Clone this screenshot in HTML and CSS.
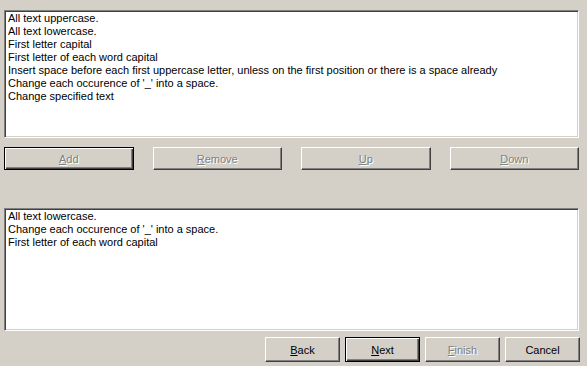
FILE: index.html
```html
<!DOCTYPE html>
<html>
<head>
  <title>Rename Rules</title>
  <link rel="stylesheet" href="styles.css">
</head>
<body>
  <div class="dialog">
    <div class="listbox list-available">
      <div class="item">All text uppercase.</div>
      <div class="item">All text lowercase.</div>
      <div class="item">First letter capital</div>
      <div class="item">First letter of each word capital</div>
      <div class="item">Insert space before each first uppercase letter, unless on the first position or there is a space already</div>
      <div class="item">Change each occurence of '_' into a space.</div>
      <div class="item">Change specified text</div>
    </div>

    <div class="edit-buttons">
      <button class="btn default" disabled><u>A</u>dd</button>
      <button class="btn" disabled><u>R</u>emove</button>
      <button class="btn" disabled><u>U</u>p</button>
      <button class="btn" disabled><u>D</u>own</button>
    </div>

    <div class="listbox list-selected">
      <div class="item">All text lowercase.</div>
      <div class="item">Change each occurence of '_' into a space.</div>
      <div class="item">First letter of each word capital</div>
    </div>

    <div class="wizard-buttons">
      <button class="btn wiz"><u>B</u>ack</button>
      <button class="btn wiz default"><u>N</u>ext</button>
      <button class="btn wiz" disabled><u>F</u>inish</button>
      <button class="btn wiz">Cancel</button>
    </div>
  </div>
</body>
</html>
```

FILE: styles.css
```css
body {
  margin: 0;
  background: #d4d0c8;
  font-family: "Liberation Sans", Arial, sans-serif;
  font-size: 11px;
  color: #000;
}
.dialog {
  width: 575px;
  padding: 10px 8px 0 4px;
}
.listbox {
  background: #fff;
  border-top: 1px solid #808080;
  border-left: 1px solid #808080;
  border-right: 1px solid #fff;
  border-bottom: 1px solid #fff;
  box-shadow: inset 1px 1px 0 #404040, inset -1px -1px 0 #d4d0c8;
  padding: 1px 2px 1px 3px;
  box-sizing: border-box;
  line-height: 13px;
  white-space: nowrap;
  overflow: hidden;
}
.list-available { height: 128px; }
.list-selected { height: 123px; margin-top: 38px; }

.edit-buttons {
  display: flex;
  gap: 19px;
  margin-top: 9px;
}
.edit-buttons .btn { flex: 1; }

.btn {
  height: 23px;
  padding: 0;
  background: #d4d0c8;
  font-family: "Liberation Sans", Arial, sans-serif;
  font-size: 11px;
  color: #000;
  border: 1px solid;
  border-color: #fff #404040 #404040 #fff;
  box-shadow: inset -1px -1px 0 #808080;
  box-sizing: border-box;
}
.btn.default {
  border: 1px solid #000;
  box-shadow: inset 1px 1px 0 #fff, inset -1px -1px 0 #404040, inset -2px -2px 0 #808080;
}
.btn:disabled {
  color: #808080;
  text-shadow: 1px 1px 0 #fff;
}
.btn u { text-decoration: underline; }

.wizard-buttons {
  display: flex;
  justify-content: flex-end;
  gap: 5px;
  margin-top: 6px;
  margin-right: -1px;
}
.btn.wiz {
  width: 75px;
  height: 25px;
}
```
